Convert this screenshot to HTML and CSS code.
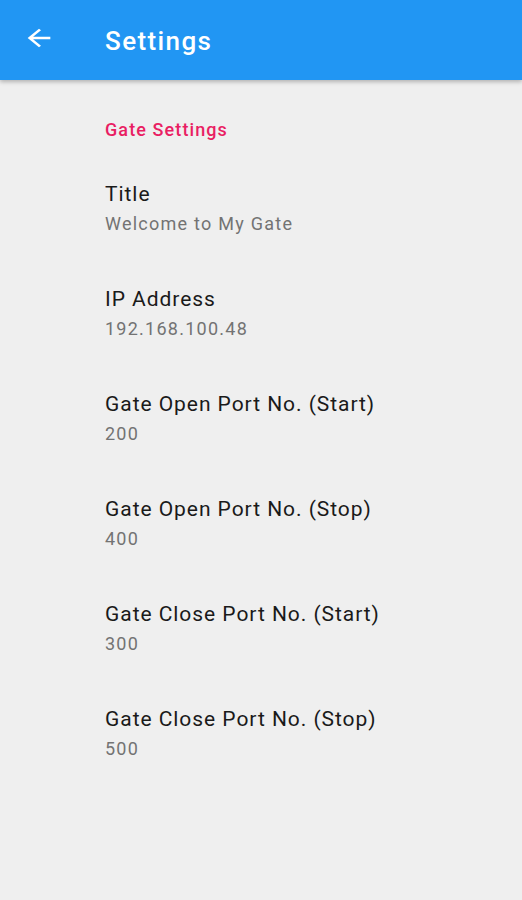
FILE: index.html
```html
<html>
	<head>
		<meta charset="utf-8" />
		<meta name="viewport" content="width=device-width, initial-scale=1">
		<title>Settings</title>
		<link rel="stylesheet" href="styles.css">
	</head>
	<body>
		<div class="app-bar">
			<a class="back" href="#">
				<svg width="34" height="28" viewBox="0 0 24 24" preserveAspectRatio="none"><path d="M20 11H7.83l5.59-5.59L12 4l-8 8 8 8 1.41-1.41L7.83 13H20v-2z" fill="#fff"/></svg>
			</a>
			<span class="bar-title">Settings</span>
		</div>
		<div class="prefs">
			<div class="category">Gate Settings</div>
			<div class="pref">
				<div class="pref-title">Title</div>
				<div class="pref-summary">Welcome to My Gate</div>
			</div>
			<div class="pref">
				<div class="pref-title">IP Address</div>
				<div class="pref-summary">192.168.100.48</div>
			</div>
			<div class="pref">
				<div class="pref-title">Gate Open Port No. (Start)</div>
				<div class="pref-summary">200</div>
			</div>
			<div class="pref">
				<div class="pref-title">Gate Open Port No. (Stop)</div>
				<div class="pref-summary">400</div>
			</div>
			<div class="pref">
				<div class="pref-title">Gate Close Port No. (Start)</div>
				<div class="pref-summary">300</div>
			</div>
			<div class="pref">
				<div class="pref-title">Gate Close Port No. (Stop)</div>
				<div class="pref-summary">500</div>
			</div>
		</div>
	</body>
</html>
```

FILE: styles.css
```css
body {
	margin: 0;
	background: #efefef;
	font-family: Roboto, "Noto Sans", sans-serif;
	height: 900px;
}

.app-bar {
	height: 80px;
	background: #2196f3;
	display: flex;
	align-items: center;
	box-shadow: 0 2px 4px rgba(0, 0, 0, 0.25);
	position: relative;
}

.back {
	display: flex;
	margin: -4px 49px 0 22px;
}

.bar-title {
	color: #fff;
	font-size: 26px;
	font-weight: 500;
	letter-spacing: 1.4px;
	margin-top: 2px;
}

.prefs {
	padding: 0 0 0 105px;
}

.category {
	color: #e91e63;
	font-size: 18px;
	font-weight: 500;
	letter-spacing: 1.1px;
	padding-top: 39px;
	height: 44px;
}

.pref {
	height: 105px;
	display: flex;
	flex-direction: column;
	padding-top: 17px;
	box-sizing: border-box;
}

.pref-title {
	color: #1a1a1a;
	font-size: 21px;
	letter-spacing: 0.95px;
	line-height: 28px;
}

.pref-summary {
	color: #737373;
	font-size: 18px;
	letter-spacing: 1.25px;
	line-height: 31px;
}
```
